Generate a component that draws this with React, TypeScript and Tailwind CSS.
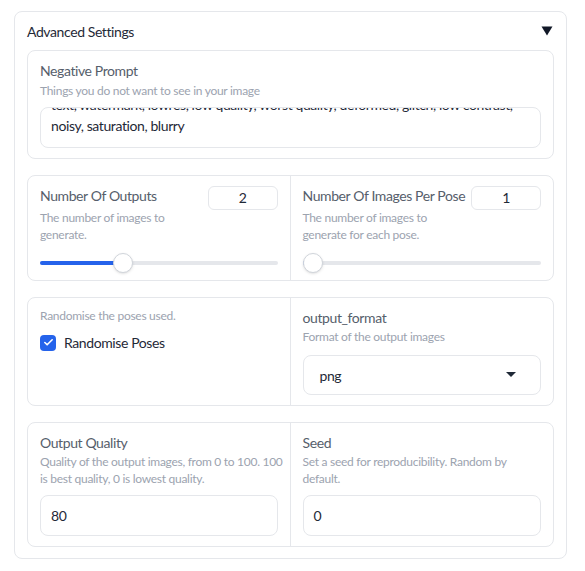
import { Check } from 'lucide-react';

const font = { fontFamily: '"Lato", "Liberation Sans", sans-serif' };

function Label({ children }: { children: React.ReactNode }) {
  return <div className="text-[14px] leading-[20px] tracking-[-0.4px] text-[#565e6b] whitespace-nowrap">{children}</div>;
}

function Info({ children }: { children: React.ReactNode }) {
  return <div className="text-[12px] leading-[17px] tracking-[-0.28px] text-[#9ca3af] whitespace-nowrap">{children}</div>;
}

function Slider({ pct }: { pct: number }) {
  return (
    <div className="relative h-[20px] mt-[10px]">
      <div className="absolute left-0 right-0 top-[8px] h-[4px] rounded-full bg-[#e5e7eb]" />
      <div className="absolute left-0 top-[8px] h-[4px] rounded-full bg-[#2563eb]" style={{ width: `calc(10px + (100% - 20px) * ${pct})` }} />
      <div
        className="absolute top-0 w-[20px] h-[20px] rounded-full bg-white border border-[#d1d5db] shadow-sm"
        style={{ left: `calc((100% - 20px) * ${pct})` }}
      />
    </div>
  );
}

const value = 'text-[14px] tracking-[-0.4px] text-[#1f2937]';

export default function App() {
  return (
    <div className="bg-white w-[585px] h-[571px] pt-[11px] pl-[14px]" style={font}>
      <div className="w-[553px] border border-[#e5e7eb] rounded-[8px] px-[12px] pb-[11px]">
        {/* Header */}
        <div className="flex items-center justify-between h-[38px]">
          <span className={value}>Advanced Settings</span>
          <svg width="12" height="10" viewBox="0 0 12 10" className="mr-[1px]">
            <polygon points="0.5,0.5 11.5,0.5 6,9.5" fill="#111827" />
          </svg>
        </div>

        <div className="flex flex-col gap-[16px]">
          {/* Negative prompt */}
          <div className="border border-[#e5e7eb] rounded-[8px] px-[12px] pt-[10px] pb-[10px]">
            <Label>Negative Prompt</Label>
            <div className="mt-[1px]">
              <Info>Things you do not want to see in your image</Info>
            </div>
            <div className="mt-[8px] h-[41px] border border-[#e5e7eb] rounded-[8px] px-[10px] overflow-hidden">
              <div className={`${value} leading-[21px] mt-[-14px] whitespace-pre`}>
                {'text, watermark, lowres, low quality, worst quality, deformed, glitch, low contrast,\nnoisy, saturation, blurry'}
              </div>
            </div>
          </div>

          {/* Sliders row */}
          <div className="grid grid-cols-2 border border-[#e5e7eb] rounded-[8px]">
            <div className="px-[12px] pt-[10px] pb-[7px] border-r border-[#e5e7eb]">
              <div className="flex justify-between items-start">
                <Label>Number Of Outputs</Label>
                <div className={`w-[70px] h-[24px] border border-[#e5e7eb] rounded-[6px] text-center leading-[22px] ${value}`}>2</div>
              </div>
              <div className="-mt-[1px]">
                <Info>The number of images to<br />generate.</Info>
              </div>
              <Slider pct={1 / 3} />
            </div>
            <div className="px-[12px] pt-[10px] pb-[7px]">
              <div className="flex justify-between items-start">
                <Label>Number Of Images Per Pose</Label>
                <div className={`w-[70px] h-[24px] border border-[#e5e7eb] rounded-[6px] text-center leading-[22px] ${value}`}>1</div>
              </div>
              <div className="-mt-[1px]">
                <Info>The number of images to<br />generate for each pose.</Info>
              </div>
              <Slider pct={0} />
            </div>
          </div>

          {/* Checkbox + dropdown row */}
          <div className="grid grid-cols-2 border border-[#e5e7eb] rounded-[8px] h-[109px]">
            <div className="px-[12px] pt-[9px] border-r border-[#e5e7eb]">
              <Info>Randomise the poses used.</Info>
              <div className="flex items-center gap-[8px] mt-[8px]">
                <div className="w-[16px] h-[16px] rounded-[4px] bg-[#2563eb] flex items-center justify-center">
                  <Check size={11} strokeWidth={3.5} color="white" />
                </div>
                <span className={value}>Randomise Poses</span>
              </div>
            </div>
            <div className="px-[12px] pt-[10px]">
              <Label>output_format</Label>
              <Info>Format of the output images</Info>
              <div className="mt-[10px] h-[40px] border border-[#e5e7eb] rounded-[8px] flex items-center justify-between pl-[16px] pr-[24px]">
                <span className={value}>png</span>
                <svg width="10" height="6" viewBox="0 0 10 6">
                  <polygon points="0,0 10,0 5,5" fill="#1f2937" />
                </svg>
              </div>
            </div>
          </div>

          {/* Quality + seed row */}
          <div className="grid grid-cols-2 border border-[#e5e7eb] rounded-[8px]">
            <div className="px-[12px] pt-[10px] pb-[10px] border-r border-[#e5e7eb]">
              <Label>Output Quality</Label>
              <Info>Quality of the output images, from 0 to 100. 100<br />is best quality, 0 is lowest quality.</Info>
              <div className={`mt-[8px] h-[41px] border border-[#e5e7eb] rounded-[8px] flex items-center px-[10px] ${value}`}>80</div>
            </div>
            <div className="px-[12px] pt-[10px] pb-[10px]">
              <Label>Seed</Label>
              <Info>Set a seed for reproducibility. Random by<br />default.</Info>
              <div className={`mt-[8px] h-[41px] border border-[#e5e7eb] rounded-[8px] flex items-center px-[10px] ${value}`}>0</div>
            </div>
          </div>
        </div>
      </div>
    </div>
  );
}
